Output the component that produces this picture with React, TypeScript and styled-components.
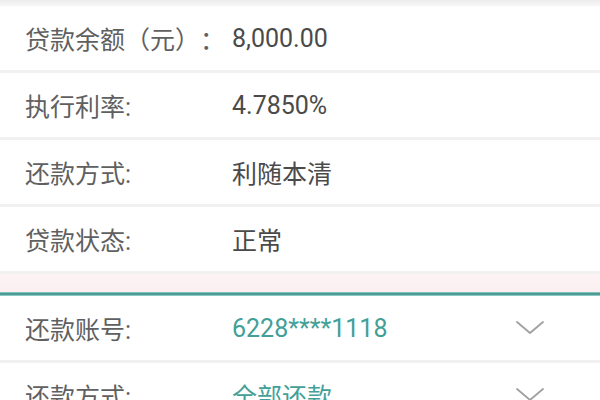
import React from 'react';
import styled, { createGlobalStyle } from 'styled-components';

const GlobalStyle = createGlobalStyle`
  html, body {
    margin: 0;
    padding: 0;
    background: #ffffff;
    overflow: hidden;
  }
  body {
    font-family: Roboto, 'Noto Sans CJK SC', sans-serif;
  }
`;

type Item = { label: string; value: string };

const loanInfo: Item[] = [
  { label: '贷款余额（元）：', value: '8,000.00' },
  { label: '执行利率:', value: '4.7850%' },
  { label: '还款方式:', value: '利随本清' },
  { label: '贷款状态:', value: '正常' },
];

const repayForm: Item[] = [
  { label: '还款账号:', value: '6228****1118' },
  { label: '还款方式:', value: '全部还款' },
];

const Chevron = () => (
  <svg width="30" height="16" viewBox="0 0 30 16" fill="none">
    <path d="M2 2 L15 13 L28 2" stroke="#a0a0a0" strokeWidth="1.8" strokeLinecap="round" strokeLinejoin="round" />
  </svg>
);

export default function App() {
  return (
    <>
      <GlobalStyle />
      <Page>
        <TopEdge />
        <Section>
          {loanInfo.map((item) => (
            <Row key={item.label}>
              <Label>{item.label}</Label>
              <Value>{item.value}</Value>
            </Row>
          ))}
        </Section>
        <Gap />
        <Accent />
        <Section>
          {repayForm.map((item) => (
            <Row key={item.label}>
              <Label>{item.label}</Label>
              <Value $accent>{item.value}</Value>
              <Arrow>
                <Chevron />
              </Arrow>
            </Row>
          ))}
        </Section>
      </Page>
    </>
  );
}

const Page = styled.div`
  width: 600px;
  height: 400px;
  display: flex;
  flex-direction: column;
  overflow: hidden;
`;

const TopEdge = styled.div`
  height: 6px;
  background: linear-gradient(#ececec, #f7f7f7);
  flex-shrink: 0;
`;

const Section = styled.div`
  display: flex;
  flex-direction: column;
  flex-shrink: 0;
`;

const Row = styled.div`
  height: 64px;
  flex-shrink: 0;
  display: flex;
  align-items: center;
  padding-left: 25px;
  background: #ffffff;
  border-bottom: 3px solid #f1f1f1;
`;

const Label = styled.div`
  width: 207px;
  flex-shrink: 0;
  font-size: 25px;
  color: #606060;
  white-space: nowrap;
  text-spacing-trim: space-all;
  font-feature-settings: 'halt' 0, 'chws' 0;
`;

const Value = styled.div<{ $accent?: boolean }>`
  flex: 1;
  font-size: 25px;
  color: ${(p) => (p.$accent ? '#42a098' : '#4a4a4a')};
  white-space: nowrap;
`;

const Arrow = styled.div`
  width: 30px;
  margin-right: 55px;
  display: flex;
  align-items: center;
  justify-content: center;
`;

const Gap = styled.div`
  height: 18px;
  flex-shrink: 0;
  background: linear-gradient(#fdf3f5, #fbeef1);
`;

const Accent = styled.div`
  height: 4px;
  flex-shrink: 0;
  background: linear-gradient(#b9e3df 0, #4c9b94 25%, #4c9b94 75%, #c8f6f4 100%);
`;
